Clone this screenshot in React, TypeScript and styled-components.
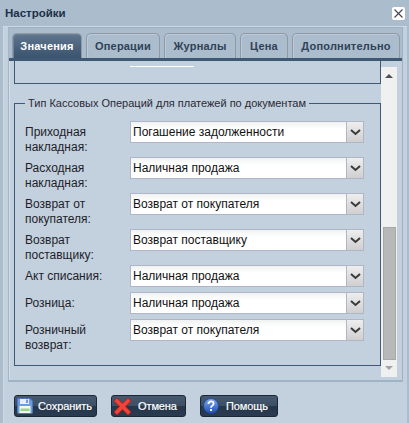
import styled, { createGlobalStyle } from 'styled-components';

const GlobalStyle = createGlobalStyle`
  html, body {
    margin: 0;
    padding: 0;
    background: #abbccd;
  }
`;

const rows = [
  { label: 'Приходная накладная:', value: 'Погашение задолженности', tall: true },
  { label: 'Расходная накладная:', value: 'Наличная продажа', tall: true },
  { label: 'Возврат от покупателя:', value: 'Возврат от покупателя', tall: true },
  { label: 'Возврат поставщику:', value: 'Возврат поставщику', tall: true },
  { label: 'Акт списания:', value: 'Наличная продажа', tall: false },
  { label: 'Розница:', value: 'Наличная продажа', tall: false },
  { label: 'Розничный возврат:', value: 'Возврат от покупателя', tall: false },
];

const tabs = [
  { title: 'Значения', width: 70 },
  { title: 'Операции', width: 74 },
  { title: 'Журналы', width: 72 },
  { title: 'Цена', width: 48 },
  { title: 'Дополнительно', width: 108 },
];

const SaveIcon = () => (
  <svg width="16" height="16" viewBox="0 0 16 16">
    <path d="M0.5 1.5 Q0.5 0.5 1.5 0.5 H13 L15.5 3 V14.5 Q15.5 15.5 14.5 15.5 H1.5 Q0.5 15.5 0.5 14.5 Z" fill="#6d9de0" stroke="#4a78ba" />
    <rect x="3" y="1" width="9" height="5" fill="#e6eef8" />
    <rect x="9" y="1.5" width="2" height="3.5" fill="#6d9de0" />
    <rect x="2.5" y="8" width="11" height="7" fill="#f5f8f0" />
    <rect x="3.5" y="10.5" width="9" height="2.5" fill="#9fcf8a" />
  </svg>
);

const CancelIcon = () => (
  <svg width="17" height="17" viewBox="0 0 17 17">
    <path d="M3 3 L14 14 M14 3 L3 14" stroke="#a8231c" strokeWidth="5" strokeLinecap="square" fill="none" />
    <path d="M3 3 L14 14 M14 3 L3 14" stroke="#f0443a" strokeWidth="3.6" strokeLinecap="square" fill="none" />
  </svg>
);

const HelpIcon = () => (
  <svg width="16" height="16" viewBox="0 0 16 16">
    <defs>
      <linearGradient id="helpFill" x1="0" y1="0" x2="0" y2="1">
        <stop offset="0" stopColor="#7fa8ea" />
        <stop offset="1" stopColor="#1c4fb4" />
      </linearGradient>
    </defs>
    <circle cx="8" cy="8" r="7.5" fill="url(#helpFill)" stroke="#1d4694" strokeWidth="0.8" />
    <path d="M5.4 6 Q5.6 3.3 8 3.3 Q10.6 3.3 10.6 5.6 Q10.6 7 9.2 7.7 Q8 8.3 8 9.8" fill="none" stroke="#fff" strokeWidth="1.8" />
    <rect x="7" y="11" width="2" height="2" fill="#fff" />
  </svg>
);

const CloseIcon = () => (
  <svg width="9" height="9" viewBox="0 0 9 9">
    <path d="M0.5 0.5 L8.5 8.5 M8.5 0.5 L0.5 8.5" stroke="#445" strokeWidth="1.1" />
  </svg>
);

const App = () => {
  return (
    <Dialog>
      <GlobalStyle />
      <TitleBar>
        <Title>Настройки</Title>
        <CloseButton>
          <CloseIcon />
        </CloseButton>
      </TitleBar>
      <Body>
        <Frame>
          <TabBar>
            {tabs.map((tab, i) => (
              <Tab key={tab.title} $active={i === 0} $width={tab.width}>
                {tab.title}
              </Tab>
            ))}
          </TabBar>
          <Panel>
            <Content>
              <ClippedGroup>
                <ClippedField />
              </ClippedGroup>
              <Group>
                <Legend>Тип Кассовых Операций для платежей по документам</Legend>
                {rows.map((row) => (
                  <Row key={row.label} $tall={row.tall}>
                    <Label>{row.label}</Label>
                    <Select>
                      <SelectValue>{row.value}</SelectValue>
                      <SelectArrow>
                        <svg width="11" height="7" viewBox="0 0 11 7">
                          <path d="M1 1 L5.5 5 L10 1" fill="none" stroke="#3a3a3a" strokeWidth="2" />
                        </svg>
                      </SelectArrow>
                    </Select>
                  </Row>
                ))}
              </Group>
            </Content>
            <Scrollbar>
              <ArrowUp />
              <Track>
                <Thumb />
              </Track>
              <ArrowDown />
            </Scrollbar>
          </Panel>
        </Frame>
        <Footer>
          <Button $width={83}>
            <SaveIcon />
            <ButtonText $gap={5}>Сохранить</ButtonText>
          </Button>
          <Button $width={75}>
            <CancelIcon />
            <ButtonText $gap={7}>Отмена</ButtonText>
          </Button>
          <Button $width={78}>
            <HelpIcon />
            <ButtonText $gap={7}>Помощь</ButtonText>
          </Button>
        </Footer>
      </Body>
    </Dialog>
  );
};

export default App;

const Dialog = styled.div`
  width: 409px;
  height: 423px;
  box-sizing: border-box;
  background: #abbccd;
  padding: 0 2px 0 3px;
  display: flex;
  flex-direction: column;
  font-family: 'Liberation Sans', Arial, sans-serif;
  overflow: hidden;
`;

const TitleBar = styled.div`
  height: 26px;
  flex: none;
  display: flex;
  align-items: center;
  justify-content: space-between;
  padding: 0 2px 0 2px;
  box-sizing: border-box;
`;

const Title = styled.div`
  font-weight: 700;
  font-size: 11.5px;
  color: #1c3048;
`;

const CloseButton = styled.div`
  width: 13px;
  height: 13px;
  background: #fff;
  border-radius: 2px;
  display: flex;
  align-items: center;
  justify-content: center;
`;

const Body = styled.div`
  flex: 1;
  min-height: 0;
  background: #c3d0dd;
  border-top: 1px solid #cdd8e2;
  border-left: 1px solid #cdd8e2;
  display: flex;
  flex-direction: column;
`;

const Frame = styled.div`
  height: 355px;
  flex: none;
  margin: 0 4px 0 4px;
  padding-top: 5px;
  box-sizing: border-box;
  background: #abbccd;
  border-top: 1px solid #9fb2c5;
  border-right: 1px solid #9fb2c5;
  border-left: 1px solid #a3b5c7;
  border-bottom: 2px solid #a0b3c6;
  display: flex;
  flex-direction: column;
`;

const TabBar = styled.div`
  height: 28px;
  flex: none;
  display: flex;
  align-items: flex-end;
  gap: 4px;
  padding-left: 3px;
  border-bottom: 3px solid #3f5873;
  box-sizing: border-box;
`;

const Tab = styled.div<{ $active: boolean; $width: number }>`
  width: ${(p) => p.$width}px;
  height: 25px;
  box-sizing: border-box;
  display: flex;
  align-items: center;
  justify-content: center;
  font-weight: 700;
  font-size: 11px;
  letter-spacing: 0.2px;
  border-radius: 5px 5px 0 0;
  border: 1px solid #8f9aa5;
  border-bottom: 0;
  color: ${(p) => (p.$active ? '#fff' : '#2f4257')};
  background: ${(p) =>
    p.$active ? 'linear-gradient(180deg, #5f768f 0%, #3a536e 100%)' : '#abbccd'};
  box-shadow: inset 1px 1px 0 ${(p) => (p.$active ? '#6f8398' : '#bccad8')};
`;

const Panel = styled.div`
  flex: 1;
  min-height: 0;
  display: flex;
  background: #c3d0dd;
  border-left: 1px solid #d5dee6;
  padding-left: 4px;
  padding-right: 5px;
  overflow: hidden;
`;

const Content = styled.div`
  flex: 1;
  min-width: 0;
`;

const ClippedGroup = styled.div`
  height: 23px;
  box-sizing: border-box;
  border: 1px solid #3f5873;
  border-top: 0;
  display: flex;
  justify-content: flex-start;
  margin-bottom: 13px;
`;

const ClippedField = styled.div`
  width: 64px;
  height: 1px;
  margin: 5px 0 0 115px;
  background: #fff;
`;

const Group = styled.fieldset`
  margin: 0;
  padding: 12px 0 0 10px;
  height: 269px;
  box-sizing: border-box;
  border: 1px solid #3f5873;
`;

const Legend = styled.legend`
  font-size: 11px;
  color: #2a2a36;
  padding: 0 3px;
  margin-left: 0;
`;

const Row = styled.div<{ $tall: boolean }>`
  height: ${(p) => (p.$tall ? 36 : 27)}px;
  display: flex;
  align-items: flex-start;
`;

const Label = styled.div`
  width: 105px;
  flex: none;
  font-size: 12px;
  line-height: 14.5px;
  color: #1e1e2a;
  padding-top: 4px;
`;

const Select = styled.div`
  width: 234px;
  height: 22px;
  box-sizing: border-box;
  border: 1px solid #b0b6c8;
  display: flex;
  background: linear-gradient(180deg, #f0f2f2 0%, #fff 35%);
`;

const SelectValue = styled.div`
  flex: 1;
  font-size: 12px;
  line-height: 21px;
  padding-left: 2px;
  color: #111;
  white-space: nowrap;
`;

const SelectArrow = styled.div`
  width: 16px;
  border-left: 1px solid #b0b6c8;
  background: linear-gradient(180deg, #eeeeee 0%, #cfcfcf 100%);
  display: flex;
  align-items: center;
  justify-content: center;
`;

const Scrollbar = styled.div`
  width: 16px;
  flex: none;
  height: 310px;
  margin-top: 6px;
  background: #f0f0f0;
  display: flex;
  flex-direction: column;
  align-items: center;
`;

const ArrowUp = styled.div`
  width: 0;
  height: 0;
  margin: 7px 0 6px;
  border-left: 4px solid transparent;
  border-right: 4px solid transparent;
  border-bottom: 4px solid #505050;
`;

const Track = styled.div`
  flex: 1;
  width: 100%;
  display: flex;
  flex-direction: column;
  justify-content: flex-end;
  align-items: center;
`;

const Thumb = styled.div`
  width: 13px;
  height: 133px;
  box-sizing: border-box;
  background: #b8b8b8;
  border: 1px solid #a8a8a8;
`;

const ArrowDown = styled.div`
  width: 0;
  height: 0;
  margin: 6px 0 7px;
  border-left: 4px solid transparent;
  border-right: 4px solid transparent;
  border-top: 4px solid #a3a3a3;
`;

const Footer = styled.div`
  flex: 1;
  display: flex;
  align-items: flex-start;
  gap: 14px;
  padding: 13px 0 0 10px;
`;

const Button = styled.div<{ $width: number }>`
  width: ${(p) => p.$width}px;
  height: 22px;
  box-sizing: border-box;
  display: flex;
  align-items: center;
  padding-left: 2px;
  border-radius: 3px;
  border: 1px solid #1b2735;
  background: linear-gradient(180deg, #46596f 0%, #3d4f64 50%, #26364a 50%, #2a3a4f 100%);
  color: #fff;
  font-size: 11px;
  letter-spacing: -0.1px;
  -webkit-text-stroke: 0.2px #fff;
`;

const ButtonText = styled.span<{ $gap: number }>`
  margin-left: ${(p) => p.$gap}px;
`;
